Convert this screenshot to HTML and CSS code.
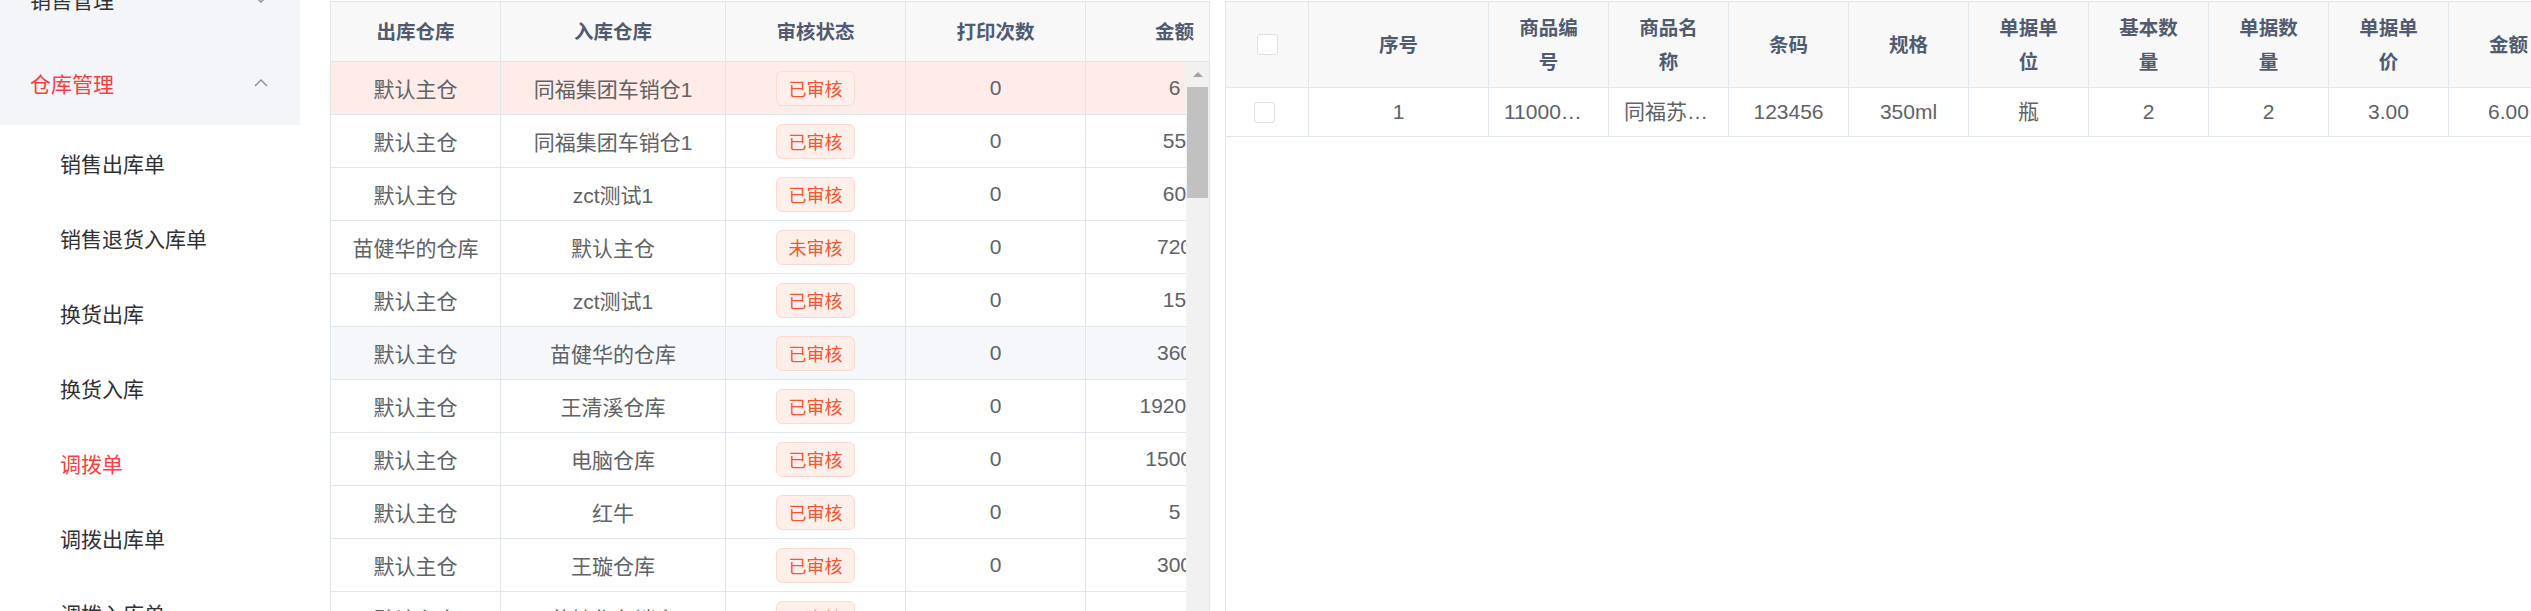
FILE: index.html
```html
<!DOCTYPE html>
<html lang="zh-CN">
<head>
<meta charset="utf-8">
<title>调拨单</title>
<link rel="stylesheet" href="styles.css">
</head>
<body>
<div class="app">
  <aside class="sidebar">
    <ul class="menu">
      <li class="menu-title"><span>销售管理</span><svg class="chev" width="14" height="8" viewBox="0 0 14 8"><polyline points="1,1 7,7 13,1" fill="none" stroke="#909399" stroke-width="1.5"/></svg></li>
      <li class="menu-title active"><span>仓库管理</span><svg class="chev" width="14" height="8" viewBox="0 0 14 8"><polyline points="1,7 7,1 13,7" fill="none" stroke="#909399" stroke-width="1.5"/></svg></li>
      <li class="menu-item">销售出库单</li>
      <li class="menu-item">销售退货入库单</li>
      <li class="menu-item">换货出库</li>
      <li class="menu-item">换货入库</li>
      <li class="menu-item active">调拨单</li>
      <li class="menu-item">调拨出库单</li>
      <li class="menu-item">调拨入库单</li>
    </ul>
  </aside>

  <main class="main">
    <section class="ltable">
      <div class="lhead">
        <div class="lrow">
          <div class="cell th">出库仓库</div>
          <div class="cell th">入库仓库</div>
          <div class="cell th">审核状态</div>
          <div class="cell th">打印次数</div>
          <div class="cell th">金额</div>
        </div>
      </div>
      <div class="lbody">
        <div class="lbody-view">
          <div class="lrow current">
            <div class="cell td">默认主仓</div><div class="cell td">同福集团车销仓1</div><div class="cell td"><span class="tag">已审核</span></div><div class="cell td">0</div><div class="cell td">6</div>
          </div>
          <div class="lrow">
            <div class="cell td">默认主仓</div><div class="cell td">同福集团车销仓1</div><div class="cell td"><span class="tag">已审核</span></div><div class="cell td">0</div><div class="cell td">55</div>
          </div>
          <div class="lrow">
            <div class="cell td">默认主仓</div><div class="cell td">zct测试1</div><div class="cell td"><span class="tag">已审核</span></div><div class="cell td">0</div><div class="cell td">60</div>
          </div>
          <div class="lrow">
            <div class="cell td">苗健华的仓库</div><div class="cell td">默认主仓</div><div class="cell td"><span class="tag">未审核</span></div><div class="cell td">0</div><div class="cell td">720</div>
          </div>
          <div class="lrow">
            <div class="cell td">默认主仓</div><div class="cell td">zct测试1</div><div class="cell td"><span class="tag">已审核</span></div><div class="cell td">0</div><div class="cell td">15</div>
          </div>
          <div class="lrow hover">
            <div class="cell td">默认主仓</div><div class="cell td">苗健华的仓库</div><div class="cell td"><span class="tag">已审核</span></div><div class="cell td">0</div><div class="cell td">360</div>
          </div>
          <div class="lrow">
            <div class="cell td">默认主仓</div><div class="cell td">王清溪仓库</div><div class="cell td"><span class="tag">已审核</span></div><div class="cell td">0</div><div class="cell td">192000</div>
          </div>
          <div class="lrow">
            <div class="cell td">默认主仓</div><div class="cell td">电脑仓库</div><div class="cell td"><span class="tag">已审核</span></div><div class="cell td">0</div><div class="cell td">15000</div>
          </div>
          <div class="lrow">
            <div class="cell td">默认主仓</div><div class="cell td">红牛</div><div class="cell td"><span class="tag">已审核</span></div><div class="cell td">0</div><div class="cell td">5</div>
          </div>
          <div class="lrow">
            <div class="cell td">默认主仓</div><div class="cell td">王璇仓库</div><div class="cell td"><span class="tag">已审核</span></div><div class="cell td">0</div><div class="cell td">300</div>
          </div>
          <div class="lrow">
            <div class="cell td">默认主仓</div><div class="cell td">苗健华车销仓</div><div class="cell td"><span class="tag">已审核</span></div><div class="cell td">0</div><div class="cell td">15000</div>
          </div>
        </div>
        <div class="scrollbar">
          <div class="sb-btn"><span class="sb-arrow"></span></div>
          <div class="sb-thumb"></div>
        </div>
      </div>
    </section>

    <section class="rtable">
      <div class="rrow rhead">
        <div class="cell th"><span class="checkbox"></span></div>
        <div class="cell th">序号</div>
        <div class="cell th">商品编<br>号</div>
        <div class="cell th">商品名<br>称</div>
        <div class="cell th">条码</div>
        <div class="cell th">规格</div>
        <div class="cell th">单据单<br>位</div>
        <div class="cell th">基本数<br>量</div>
        <div class="cell th">单据数<br>量</div>
        <div class="cell th">单据单<br>价</div>
        <div class="cell th">金额</div>
      </div>
      <div class="rrow rbody">
        <div class="cell rtd check-cell"><span class="checkbox"></span></div>
        <div class="cell rtd">1</div>
        <div class="cell rtd">110000001</div>
        <div class="cell rtd">同福苏打水</div>
        <div class="cell rtd">123456</div>
        <div class="cell rtd">350ml</div>
        <div class="cell rtd">瓶</div>
        <div class="cell rtd">2</div>
        <div class="cell rtd">2</div>
        <div class="cell rtd">3.00</div>
        <div class="cell rtd">6.00</div>
      </div>
    </section>
  </main>
</div>
</body>
</html>
```

FILE: styles.css
```css
* {
  box-sizing: border-box;
  margin: 0;
  padding: 0;
}

html, body {
  height: 100%;
}

body {
  font-family: "Liberation Sans", "Noto Sans CJK SC", sans-serif;
  background: #fff;
  overflow: hidden;
}

.app {
  display: flex;
  height: 611px;
  overflow: hidden;
}

/* ---------- sidebar ---------- */
.sidebar {
  width: 300px;
  flex: none;
  overflow: hidden;
  background: #fff;
}

.menu {
  list-style: none;
  margin-top: -43px;
}

.menu-title {
  height: 84px;
  display: flex;
  align-items: center;
  justify-content: space-between;
  padding: 0 32px 0 30px;
  background: #f3f5f9;
  font-size: 21px;
  color: #303133;
}

.menu-title.active {
  color: #ff3d3d;
}

.chev {
  display: block;
  flex: none;
}

.menu-item {
  height: 75px;
  display: flex;
  align-items: center;
  padding-left: 60px;
  font-size: 21px;
  color: #303133;
}

.menu-item.active {
  color: #ff3d3d;
}

/* ---------- main ---------- */
.main {
  flex: 1;
  min-width: 0;
  display: flex;
  gap: 15px;
  padding: 1px 0 0 30px;
  overflow: hidden;
}

.cell {
  display: flex;
  align-items: center;
  justify-content: center;
  text-align: center;
  border-right: 1px solid #dfe6ec;
  border-bottom: 1px solid #dfe6ec;
  white-space: nowrap;
  overflow: hidden;
}

.th {
  background: #f8f8f9;
  color: #515a6e;
  font-weight: bold;
  font-size: 19.5px;
  line-height: 34px;
}

.td {
  color: #606266;
  font-size: 21px;
  background: #fff;
}

/* left table */
.ltable {
  width: 880px;
  flex: none;
  border: 1px solid #dfe6ec;
  border-bottom: none;
  display: flex;
  flex-direction: column;
  overflow: hidden;
}

.lhead {
  overflow: hidden;
  flex: none;
}

.lrow {
  display: grid;
  grid-template-columns: 170px 225px 180px 180px 178px;
  width: 933px;
}

.lhead .cell {
  height: 60px;
}

.lbody {
  flex: 1;
  min-height: 0;
  display: flex;
}

.lbody-view {
  flex: 1;
  min-width: 0;
  overflow: hidden;
}

.lbody .cell {
  height: 53px;
}

.lrow.current .td {
  background: #ffece8;
}

.lrow.hover .td {
  background: #f5f7fa;
}

.tag {
  display: inline-flex;
  align-items: center;
  height: 35px;
  padding: 0 11.5px;
  border: 1px solid #ffd8cf;
  background: #ffefeb;
  color: #f9552f;
  border-radius: 6px;
  font-size: 18px;
}

.scrollbar {
  width: 23px;
  flex: none;
  background: #f1f1f1;
  display: flex;
  flex-direction: column;
  align-items: center;
}

.sb-btn {
  height: 25px;
  width: 100%;
  display: flex;
  justify-content: center;
  padding-top: 10px;
}

.sb-arrow {
  width: 0;
  height: 0;
  border-left: 5px solid transparent;
  border-right: 5px solid transparent;
  border-bottom: 5px solid #a3a3a3;
}

.sb-thumb {
  width: 21px;
  height: 111px;
  background: #c1c1c1;
}

/* right table */
.rtable {
  flex: 1;
  min-width: 0;
  border-left: 1px solid #dfe6ec;
  border-top: 1px solid #dfe6ec;
  overflow: hidden;
}

.rrow {
  display: grid;
  grid-template-columns: 83px 180px repeat(9, 120px);
  width: 1343px;
}

.rhead .cell {
  height: 86px;
}

.rtd {
  display: block;
  height: 49px;
  line-height: 48px;
  padding: 0 15px;
  color: #606266;
  font-size: 21px;
  text-overflow: ellipsis;
}

.rtd.check-cell {
  display: flex;
  padding: 0 6px 0 0;
}

.checkbox {
  display: inline-block;
  width: 21px;
  height: 21px;
  border: 1px solid #dcdfe6;
  border-radius: 3px;
  background: #fff;
}
```
